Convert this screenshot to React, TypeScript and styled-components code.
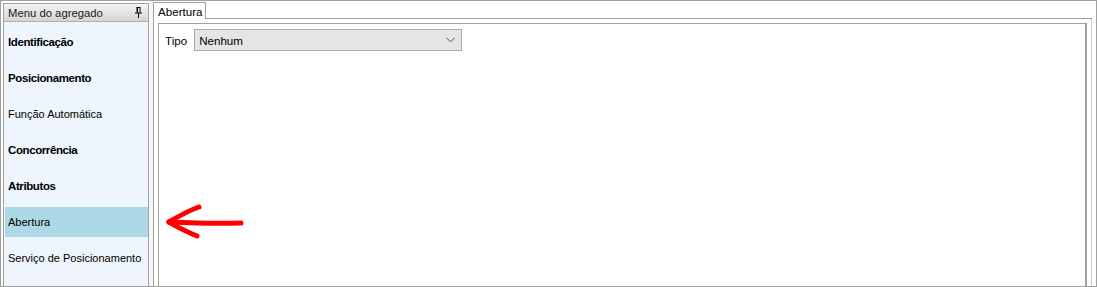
import React from "react";
import styled, { createGlobalStyle } from "styled-components";

const Global = createGlobalStyle`
  html, body { margin: 0; padding: 0; background: #ffffff; }
  body { font-family: "Liberation Sans", Arial, sans-serif; }
  * { box-sizing: border-box; }
`;

const Frame = styled.div`
  position: relative;
  width: 1097px;
  height: 287px;
  border: 1px solid #a0a0a0;
  background: #ffffff;
  display: flex;
  padding: 2px 4px 0 2px;
  font-size: 12px;
  color: #000;
  overflow: hidden;
`;

const SidePanel = styled.div`
  width: 146px;
  flex: none;
  display: flex;
  flex-direction: column;
  border: 1px solid #a0a0a0;
  border-bottom: none;
  background: #eef5fc;
`;

const PanelHeader = styled.div`
  height: 18px;
  display: flex;
  align-items: center;
  justify-content: space-between;
  padding: 0 5px 0 4px;
  background: linear-gradient(#f4f4f4, #d4d4d4);
  border-bottom: 1px solid #b0b0b0;
  color: #1a1a1a;
  font-size: 11.3px;
`;

const ItemList = styled.div`
  display: flex;
  flex-direction: column;
  gap: 6px;
  padding: 5px 0 0 1px;
`;

const Item = styled.div<{ $bold?: boolean; $selected?: boolean }>`
  height: 30px;
  display: flex;
  align-items: center;
  padding-left: 3px;
  font-size: ${(p) => (p.$bold ? "11.5px" : "11px")};
  font-weight: ${(p) => (p.$bold ? 700 : 400)};
  letter-spacing: ${(p) => (p.$bold ? "-0.4px" : "0")};
  background: ${(p) => (p.$selected ? "#add8e6" : "transparent")};
  color: #000;
`;

const Splitter = styled.div`
  width: 4px;
  flex: none;
  background: #f7f7f7;
`;

const TabControl = styled.div`
  flex: 1;
  display: flex;
  flex-direction: column;
  margin-top: -1px;
`;

const TabStrip = styled.div`
  height: 17px;
  display: flex;
  flex: none;
`;

const Tab = styled.div`
  height: 17px;
  padding: 0 3px 0 4px;
  display: flex;
  align-items: center;
  border: 1px solid #a0a0a0;
  border-bottom: none;
  background: #ffffff;
  font-size: 11.6px;
`;

const TabFiller = styled.div`
  flex: 1;
  border-bottom: 1px solid #a0a0a0;
`;

const TabBody = styled.div`
  flex: 1;
  border-left: 1px solid #a0a0a0;
  border-right: 1px solid #c8c8c8;
  padding: 4px 4px 0 4px;
  display: flex;
`;

const PageBox = styled.div`
  flex: 1;
  border: 1px solid #a0a0a0;
  border-right: 2px solid #a0a0a0;
  border-bottom: none;
  padding: 5px 6px;
  display: flex;
  align-items: flex-start;
`;

const FieldRow = styled.div`
  display: flex;
  align-items: center;
  gap: 7px;
`;

const Label = styled.span`
  font-size: 11.6px;
`;

const Select = styled.div`
  width: 268px;
  height: 22px;
  border: 1px solid #acacac;
  background: #e5e5e5;
  display: flex;
  align-items: center;
  justify-content: space-between;
  padding: 0 6px 0 4px;
  font-size: 11.6px;
`;

const ArrowOverlay = styled.svg`
  position: absolute;
  left: 0;
  top: 0;
  pointer-events: none;
`;

const PinIcon = () => (
  <svg width="9" height="13" viewBox="0 0 9 13">
    <path d="M2.5 1.5h4M3 1.5v5M6 1.5v5M1 7h7M4.5 7v5" stroke="#000" strokeWidth="1" fill="none" />
    <rect x="3" y="1.5" width="1" height="5" fill="#000" />
  </svg>
);

const Chevron = () => (
  <svg width="9" height="6" viewBox="0 0 9 6">
    <path d="M0.5 0.8 L4.5 4.8 L8.5 0.8" stroke="#555" strokeWidth="1" fill="none" />
  </svg>
);

const items: { label: string; bold?: boolean; selected?: boolean }[] = [
  { label: "Identificação", bold: true },
  { label: "Posicionamento", bold: true },
  { label: "Função Automática" },
  { label: "Concorrência", bold: true },
  { label: "Atributos", bold: true },
  { label: "Abertura", selected: true },
  { label: "Serviço de Posicionamento" },
];

export default function App() {
  return (
    <>
      <Global />
      <Frame>
        <SidePanel>
          <PanelHeader>
            <span>Menu do agregado</span>
            <PinIcon />
          </PanelHeader>
          <ItemList>
            {items.map((it) => (
              <Item key={it.label} $bold={it.bold} $selected={it.selected}>
                {it.label}
              </Item>
            ))}
          </ItemList>
        </SidePanel>
        <Splitter />
        <TabControl>
          <TabStrip>
            <Tab>Abertura</Tab>
            <TabFiller />
          </TabStrip>
          <TabBody>
            <PageBox>
              <FieldRow>
                <Label>Tipo</Label>
                <Select>
                  <span>Nenhum</span>
                  <Chevron />
                </Select>
              </FieldRow>
            </PageBox>
          </TabBody>
        </TabControl>
        <ArrowOverlay width="1097" height="287" viewBox="0 0 1097 287">
          <g stroke="#ff0000" strokeWidth="5" strokeLinecap="round" strokeLinejoin="round" fill="none">
            <path d="M168 221 C 190 222, 215 223, 240 222" />
            <path d="M168 221 C 178 215, 189 209, 198 206" />
            <path d="M168 221 C 177 227, 187 231, 196 235" />
          </g>
        </ArrowOverlay>
      </Frame>
    </>
  );
}
